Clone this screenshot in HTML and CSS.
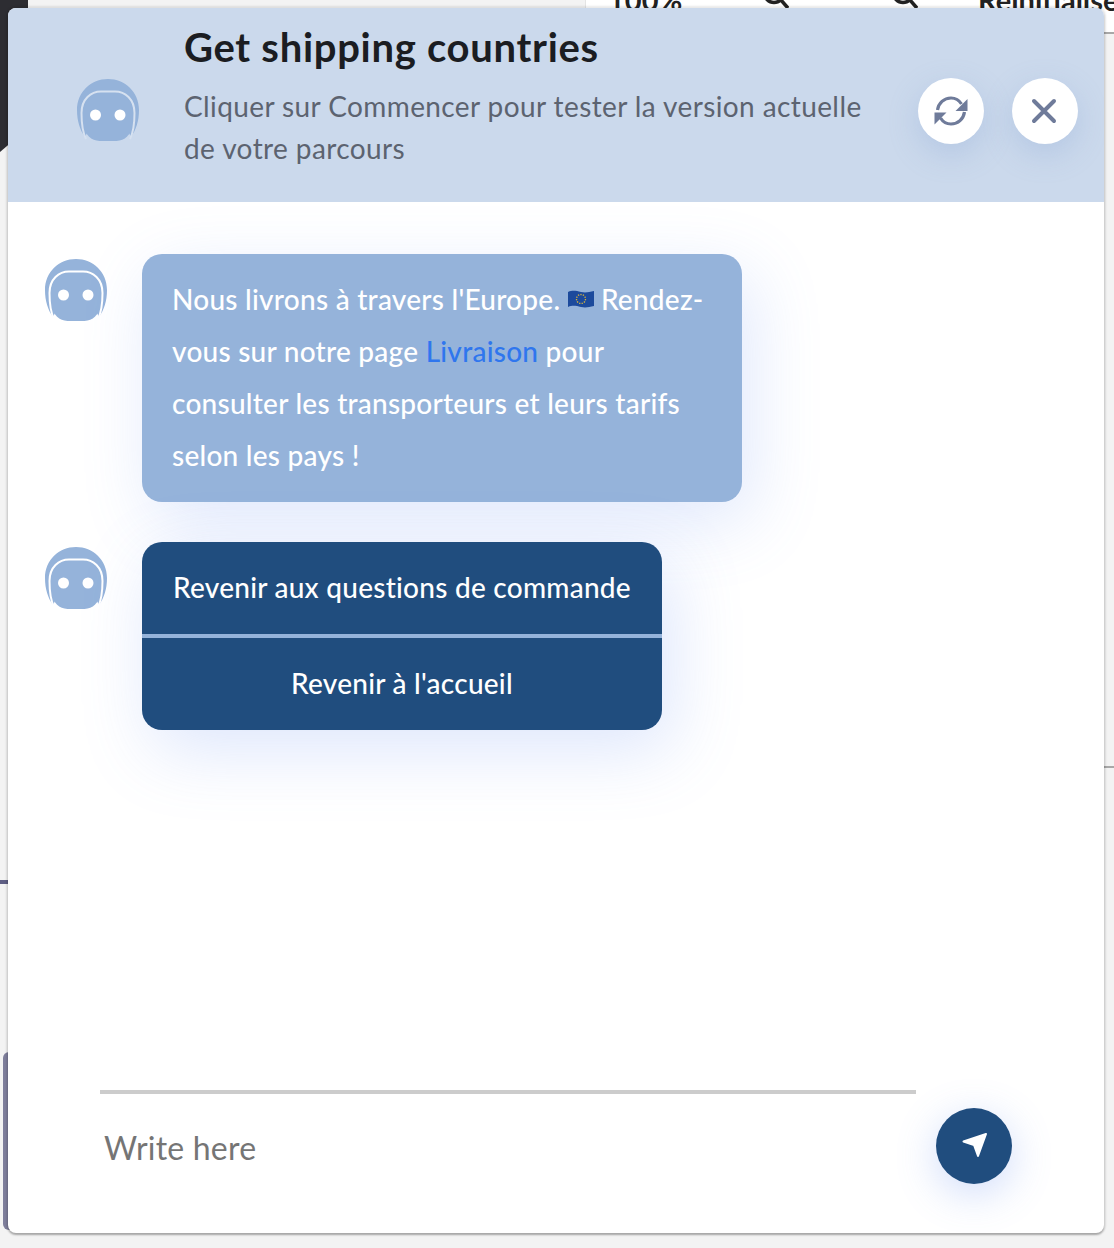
FILE: index.html
```html
<!DOCTYPE html>
<html lang="fr">

<head>
    <meta charset="UTF-8">
    <meta name="viewport" content="width=device-width, initial-scale=1.0">
    <title>Get shipping countries</title>
    <link rel="stylesheet" href="styles.css">
</head>

<body>
    <svg class="defs" width="0" height="0">
        <symbol id="bot" viewBox="0 0 62 62">
            <path class="bot-fill" d="M31 0C48 0 62 13 62 31C62 42 59 51 54 58L50 50H12L8 58C3 51 0 42 0 31C0 13 14 0 31 0Z" />
            <path class="bot-ring" d="M9 60C6 54 4.500 44 4.500 34C4.500 20 14 12.500 24 12.500H38C48 12.500 57.500 20 57.500 34C57.500 44 56 54 53 60" />
            <rect class="bot-fill" x="7.500" y="15" width="47" height="47" rx="15" />
            <circle class="bot-eye" cx="18.500" cy="36" r="5.500" />
            <circle class="bot-eye" cx="43" cy="36" r="5.500" />
        </symbol>
        <symbol id="glass" viewBox="0 0 26 10">
            <circle class="glass-line" cx="11" cy="-7" r="9.500" />
            <path class="glass-line" d="M18 0L25 8" />
        </symbol>
    </svg>

    <!-- what shows behind the window -->
    <div class="behind">
        <div class="behind-bar">
            <span class="behind-zoom">100%</span>
            <svg class="behind-glass behind-glass-a"><use href="#glass" /></svg>
            <svg class="behind-glass behind-glass-b"><use href="#glass" /></svg>
            <span class="behind-reset">Réinitialiser</span>
        </div>
        <div class="behind-dark"></div>
        <div class="behind-line"></div>
        <div class="behind-panel"></div>
        <div class="behind-rule behind-rule-a"></div>
        <div class="behind-rule behind-rule-b"></div>
    </div>

    <div class="window">
        <div class="head">
            <svg class="avatar avatar-head"><use href="#bot" /></svg>
            <div class="head-text">
                <h1 class="title">Get shipping countries</h1>
                <p class="subtitle">Cliquer sur Commencer pour tester la version actuelle de votre parcours</p>
            </div>
            <div class="head-btns">
                <span class="round-btn">
                    <svg width="34" height="30" viewBox="0 0 34 30">
                        <path class="ico-line ico-thin" d="M3.500 14C4.500 7 10 2 17 2C21.500 2 25 4 27.500 8" />
                        <path class="ico-line ico-thin" d="M30.500 16C29.500 23 24 28 17 28C12.500 28 9 26 6.500 22" />
                        <path class="ico-fill" d="M33.500 3V15H21.500Z" />
                        <path class="ico-fill" d="M0.500 16.500H12.500L0.500 28.500Z" />
                    </svg>
                </span>
                <span class="round-btn">
                    <svg class="ico-x" width="26" height="26" viewBox="0 0 26 26">
                        <path class="ico-line" d="M3 3L23 23M23 3L3 23" />
                    </svg>
                </span>
            </div>
        </div>

        <div class="messages">
            <div class="msg">
                <svg class="avatar avatar-msg"><use href="#bot" /></svg>
                <div class="bubble">
                    Nous livrons à travers l'Europe.
                    <svg class="flag" width="26" height="18" viewBox="0 0 26 18">
                        <path d="M0 2C5 0 8 1 13 2C18 3 21 2 26 1V16C21 17 18 18 13 17C8 16 5 15 0 17Z" fill="#1c4a9c" />
                        <circle cx="13" cy="9" r="4.500" fill="none" stroke="#d3b13c" stroke-width="1.300" stroke-dasharray="1.300 1.200" />
                    </svg>
                    Rendez-vous sur notre page <a class="link" href="#">Livraison</a> pour consulter les transporteurs et leurs tarifs selon les pays !
                </div>
            </div>
            <div class="msg">
                <svg class="avatar avatar-msg"><use href="#bot" /></svg>
                <div class="choices">
                    <div class="choice">Revenir aux questions de commande</div>
                    <div class="choice">Revenir à l'accueil</div>
                </div>
            </div>
        </div>

        <div class="foot">
            <input class="write" type="text" placeholder="Write here">
            <span class="send">
                <svg width="76" height="76" viewBox="0 0 76 76">
                    <path class="send-arrow" d="M50 26L27.500 33.500L38 37L42 48Z" />
                </svg>
            </span>
        </div>
    </div>
</body>

</html>
```

FILE: styles.css
```css
* {
    margin: 0;
    padding: 0;
    box-sizing: border-box;
}

html,
body {
    height: 1248px;
    overflow: hidden;
}

body {
    background: #f3f3f3;
    font-family: "Lato", "Liberation Sans", sans-serif;
    padding: 8px 10px 15px 8px;
}

.defs {
    position: absolute;
}

/* page behind the window */
.behind-bar {
    position: absolute;
    left: 585px;
    top: 0;
    width: 529px;
    height: 32px;
    background: #fff;
    border-left: 1px solid #e4e4e4;
    overflow: hidden;
}

.behind-zoom,
.behind-reset {
    position: absolute;
    top: -18px;
    font-size: 29px;
    font-weight: 700;
    color: #222;
}

.behind-zoom {
    left: 22px;
}

.behind-reset {
    left: 392px;
}

.behind-glass {
    position: absolute;
    top: 0;
    width: 26px;
    height: 10px;
}

.glass-line {
    fill: none;
    stroke: #222;
    stroke-width: 3.500;
}

.behind-glass-a {
    left: 177px;
}

.behind-glass-b {
    left: 306px;
}

.behind-dark {
    position: absolute;
    left: 0;
    top: 0;
    width: 28px;
    height: 152px;
    background: #2d2d32;
    clip-path: polygon(0 0, 28px 0, 28px 128px, 0 152px);
}

.behind-line {
    position: absolute;
    left: 0;
    top: 880px;
    width: 8px;
    height: 4px;
    background: #5f5f85;
}

.behind-panel {
    position: absolute;
    left: 3px;
    top: 1052px;
    width: 8px;
    height: 178px;
    background: #7f7f9c;
    border-radius: 6px 0 0 6px;
}

.behind-rule {
    position: absolute;
    left: 1100px;
    width: 14px;
    height: 2px;
    background: #a8a8a8;
}

.behind-rule-a {
    top: 32px;
}

.behind-rule-b {
    top: 766px;
}

/* window */
.window {
    position: relative;
    height: 1225px;
    background: #fff;
    border-radius: 8px;
    box-shadow: 0 2px 2px rgba(0, 0, 0, 0.25), 0 0 2px 2px rgba(0, 0, 0, 0.09);
    display: flex;
    flex-direction: column;
    overflow: hidden;
}

.head {
    height: 194px;
    flex-shrink: 0;
    background: #cbd9ec;
    padding: 12px 26px 0 69px;
    display: flex;
    align-items: center;
}

.avatar {
    width: 62px;
    height: 62px;
    flex-shrink: 0;
}

.avatar-head {
    color: #d6e1f0;
    margin-top: -2px;
}

.avatar-msg {
    color: #fff;
    margin-top: 5px;
}

.bot-fill {
    fill: #95b3da;
}

.bot-ring {
    fill: none;
    stroke: currentColor;
    stroke-width: 2;
}

.bot-eye {
    fill: #fff;
}

.head-text {
    align-self: flex-start;
    width: 700px;
    margin-left: 45px;
    padding-top: 3px;
}

.title {
    font-size: 40px;
    line-height: 48px;
    font-weight: 700;
    letter-spacing: 0.7px;
    color: #1b1d22;
    margin-bottom: 14px;
}

.subtitle {
    font-size: 28px;
    line-height: 42px;
    letter-spacing: 0.4px;
    color: #5c6370;
}

.head-btns {
    margin-left: auto;
    display: flex;
    gap: 28px;
}

.round-btn {
    width: 66px;
    height: 66px;
    border-radius: 50%;
    background: #fff;
    box-shadow: 0 10px 30px rgba(130, 160, 210, 0.3);
    display: flex;
    align-items: center;
    justify-content: center;
}

.ico-line {
    fill: none;
    stroke: #6f7b9a;
    stroke-width: 4;
    stroke-linecap: round;
}

.ico-thin {
    stroke-width: 3.200;
    stroke-linecap: butt;
}

.ico-fill {
    fill: #6f7b9a;
}

.ico-x {
    margin-right: 2px;
}

/* messages */
.messages {
    flex: 1;
    padding: 52px 0 0 37px;
    display: flex;
    flex-direction: column;
    gap: 40px;
}

.msg {
    display: flex;
    align-items: flex-start;
    gap: 35px;
}

.bubble {
    width: 600px;
    padding: 19px 30px 21px;
    background: #95b3da;
    border-radius: 20px;
    color: #fff;
    font-size: 28px;
    font-weight: 500;
    line-height: 52px;
    letter-spacing: 0.25px;
    box-shadow: 10px 20px 70px rgba(100, 140, 240, 0.2);
}

.flag {
    vertical-align: 2px;
}

.link {
    color: #2f76ee;
    text-decoration: none;
}

.choices {
    width: 520px;
    border-radius: 20px;
    overflow: hidden;
    background: #204d7e;
    box-shadow: 10px 20px 70px rgba(100, 140, 240, 0.22);
}

.choice {
    height: 92px;
    padding-bottom: 2px;
    display: flex;
    align-items: center;
    justify-content: center;
    color: #fff;
    font-size: 28px;
    font-weight: 500;
    letter-spacing: 0.25px;
}

.choice + .choice {
    height: 96px;
    border-top: 4px solid #95b3da;
}

/* input row */
.foot {
    height: 143px;
    flex-shrink: 0;
    padding-left: 92px;
    display: flex;
    align-items: flex-start;
    gap: 20px;
}

.write {
    width: 816px;
    height: 116px;
    border: 0;
    border-top: 4px solid #ccc;
    padding: 0 4px 6px;
    outline: none;
    background: transparent;
    font-family: inherit;
    font-size: 32px;
    letter-spacing: 0.2px;
    color: #333;
}

.write::placeholder {
    color: #757575;
    opacity: 1;
}

.send {
    width: 76px;
    height: 76px;
    margin-top: 18px;
    border-radius: 50%;
    background: #204d7e;
    box-shadow: 0 10px 40px rgba(100, 140, 240, 0.3);
}

.send svg {
    display: block;
}

.send-arrow {
    fill: #fff;
    stroke: #fff;
    stroke-width: 2;
    stroke-linejoin: round;
}
```
